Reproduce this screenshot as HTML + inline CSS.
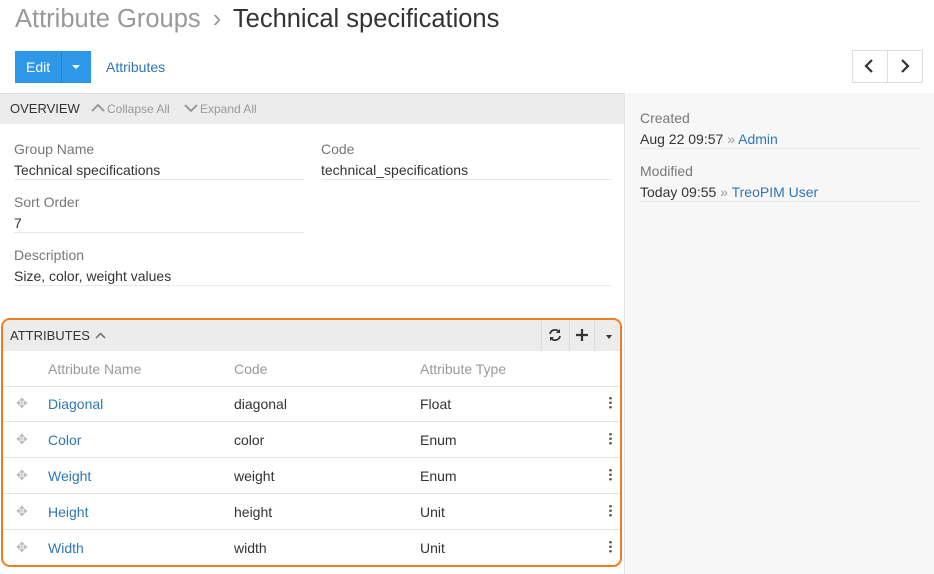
<!DOCTYPE html>
<html><head><style>
*{box-sizing:border-box;margin:0;padding:0}
body{width:934px;height:574px;overflow:hidden;background:#fff;font-family:"Liberation Sans",sans-serif;font-size:14px;color:#333;position:relative}
.a{position:absolute}
.lk{color:#2f77b5}
.lbl{color:#777;font-size:14px}
.line{border-bottom:1px solid #e8e8e8}
.dt{position:absolute;left:606px;top:10px;width:3px;height:14px;background:radial-gradient(circle,#666 1.3px,transparent 1.5px) 0 0/3px 4.5px repeat-y}
</style></head><body>
<div class="a" style="left:15px;top:5px;font-size:25.5px;color:#999">Attribute Groups <span style="margin:0 5px">›</span> <span style="color:#333">Technical specifications</span></div>
<div class="a" style="left:15px;top:51px;width:76px;height:32px;background:#2d98e8"></div>
<div class="a" style="left:61px;top:51px;width:1px;height:32px;background:#1f80cc"></div>
<div class="a" style="left:26px;top:59px;color:#fff;font-size:14px">Edit</div>
<div class="a" style="left:72px;top:65px;border-left:4px solid transparent;border-right:4px solid transparent;border-top:4px solid #fff"></div>
<div class="a lk" style="left:106px;top:59px">Attributes</div>
<div class="a" style="left:852px;top:50px;width:71px;height:33px;border:1px solid #ddd"></div>
<div class="a" style="left:887px;top:50px;width:1px;height:33px;background:#ddd"></div>
<svg class="a" style="left:862px;top:58px" width="14" height="16"><path d="M10 2L4 8l6 6" stroke="#333" stroke-width="2.2" fill="none"/></svg>
<svg class="a" style="left:898px;top:58px" width="14" height="16"><path d="M4 2l6 6-6 6" stroke="#333" stroke-width="2.2" fill="none"/></svg>
<div class="a" style="left:0;top:93px;width:624px;height:31px;background:#ececec;border-top:1px solid #ddd"></div>
<div class="a" style="left:10px;top:101px;font-size:13px;color:#333">OVERVIEW</div>
<svg class="a" style="left:91px;top:103px" width="14" height="10"><path d="M1 8l6-6 6 6" stroke="#999" stroke-width="2" fill="none"/></svg>
<div class="a" style="left:107px;top:102px;font-size:12px;color:#999">Collapse All</div>
<svg class="a" style="left:184px;top:103px" width="14" height="10"><path d="M1 2l6 6 6-6" stroke="#999" stroke-width="2" fill="none"/></svg>
<div class="a" style="left:200px;top:102px;font-size:12px;color:#999">Expand All</div>
<div class="a" style="left:624px;top:93px;width:310px;height:481px;background:#f7f7f7;border-left:1px solid #e3e3e3"></div>
<div class="a lbl" style="left:14px;top:141px">Group Name</div>
<div class="a line" style="left:14px;top:162px;width:290px;height:18px">Technical specifications</div>
<div class="a lbl" style="left:321px;top:141px">Code</div>
<div class="a line" style="left:321px;top:162px;width:290px;height:18px">technical_specifications</div>
<div class="a lbl" style="left:14px;top:194px">Sort Order</div>
<div class="a line" style="left:14px;top:215px;width:290px;height:18px">7</div>
<div class="a lbl" style="left:14px;top:247px">Description</div>
<div class="a line" style="left:14px;top:268px;width:597px;height:18px">Size, color, weight values</div>
<div class="a lbl" style="left:640px;top:110px">Created</div>
<div class="a line" style="left:640px;top:131px;width:280px;height:18px">Aug 22 09:57 <span style="color:#999">»</span> <span class="lk">Admin</span></div>
<div class="a lbl" style="left:640px;top:163px">Modified</div>
<div class="a line" style="left:640px;top:184px;width:280px;height:18px">Today 09:55 <span style="color:#999">»</span> <span class="lk">TreoPIM User</span></div>
<div class="a" style="left:1px;top:318px;width:621px;height:249px;border:2px solid #f07d22;border-radius:9px;overflow:hidden">
 <div style="position:absolute;left:0;top:0;width:100%;height:31px;background:#ececec"></div>
 <div style="position:absolute;left:7px;top:8px;font-size:13px">ATTRIBUTES</div>
 <svg style="position:absolute;left:92px;top:12px" width="11" height="8"><path d="M1 6l4.5-4.5L10 6" stroke="#777" stroke-width="1.6" fill="none"/></svg>
 <div style="position:absolute;left:538px;top:0;width:81px;height:31px;border-left:1px solid #ddd"></div>
 <div style="position:absolute;left:566px;top:0;width:1px;height:31px;background:#ddd"></div>
 <div style="position:absolute;left:591px;top:0;width:1px;height:31px;background:#ddd"></div>
 <svg style="position:absolute;left:545px;top:8px" width="14" height="14"><path d="M2 6a5 5 0 0 1 9-2M12 8a5 5 0 0 1-9 2" stroke="#333" stroke-width="1.8" fill="none"/><path d="M12 1v4h-4zM2 13v-4h4z" fill="#333"/></svg>
 <svg style="position:absolute;left:573px;top:9px" width="12" height="12"><path d="M6 0v12M0 6h12" stroke="#333" stroke-width="2.2"/></svg>
 <div style="position:absolute;left:603px;top:15px;border-left:3px solid transparent;border-right:3px solid transparent;border-top:4px solid #333"></div>
 <div style="position:absolute;left:0;top:31px;width:100%;height:36px;border-bottom:1px solid #e3e3e3;color:#999">
  <span style="position:absolute;left:45px;top:10px">Attribute Name</span><span style="position:absolute;left:231px;top:10px">Code</span><span style="position:absolute;left:417px;top:10px">Attribute Type</span></div>
</div>
<div class="a" style="left:3px;top:386px;width:617px">
 <div style="position:relative;height:36px;border-bottom:1px solid #e3e3e3"><span style="position:absolute;left:13px;top:9px;color:#bbb">✥</span><span class="lk" style="position:absolute;left:45px;top:10px">Diagonal</span><span style="position:absolute;left:231px;top:10px">diagonal</span><span style="position:absolute;left:417px;top:10px">Float</span><i class="dt"></i></div>
 <div style="position:relative;height:36px;border-bottom:1px solid #e3e3e3"><span style="position:absolute;left:13px;top:9px;color:#bbb">✥</span><span class="lk" style="position:absolute;left:45px;top:10px">Color</span><span style="position:absolute;left:231px;top:10px">color</span><span style="position:absolute;left:417px;top:10px">Enum</span><i class="dt"></i></div>
 <div style="position:relative;height:36px;border-bottom:1px solid #e3e3e3"><span style="position:absolute;left:13px;top:9px;color:#bbb">✥</span><span class="lk" style="position:absolute;left:45px;top:10px">Weight</span><span style="position:absolute;left:231px;top:10px">weight</span><span style="position:absolute;left:417px;top:10px">Enum</span><i class="dt"></i></div>
 <div style="position:relative;height:36px;border-bottom:1px solid #e3e3e3"><span style="position:absolute;left:13px;top:9px;color:#bbb">✥</span><span class="lk" style="position:absolute;left:45px;top:10px">Height</span><span style="position:absolute;left:231px;top:10px">height</span><span style="position:absolute;left:417px;top:10px">Unit</span><i class="dt"></i></div>
 <div style="position:relative;height:36px"><span style="position:absolute;left:13px;top:9px;color:#bbb">✥</span><span class="lk" style="position:absolute;left:45px;top:10px">Width</span><span style="position:absolute;left:231px;top:10px">width</span><span style="position:absolute;left:417px;top:10px">Unit</span><i class="dt"></i></div>
</div>
</body></html>
